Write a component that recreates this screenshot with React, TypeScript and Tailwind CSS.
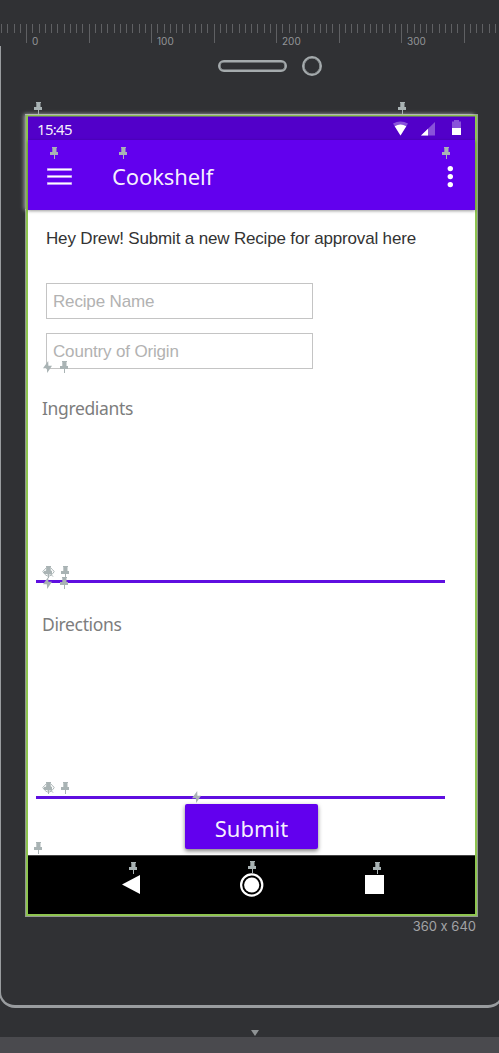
import React from 'react';

const ticks = Array.from({ length: 80 }, (_, i) => i);
const labels = ['0', '100', '200', '300'];

const pins: [number, number][] = [
  [34, 102], [398, 102], [50, 147], [119, 147], [442, 147], [60, 361],
  [44, 566], [61, 566], [60, 577], [44, 782], [61, 782], [34, 842],
  [129, 862], [248, 861], [373, 862],
];
const bolts: [number, number][] = [[43, 361], [43, 577], [192, 791]];
const eyes: [number, number][] = [[42, 566], [42, 782]];

function Ruler() {
  return (
    <div className="relative h-[46px] shrink-0 overflow-hidden pt-6">
      <div className="flex pl-[1.2px]">
        {ticks.map((i) => (
          <div key={i} className="w-[6.25px] shrink-0">
            <div className={i % 10 === 4 ? 'h-[19px] w-px bg-[#5f6063]' : 'h-[9px] w-px bg-[#5f6063]'} />
          </div>
        ))}
      </div>
      <div className="absolute top-[35px] left-[32px] flex font-['Inter',sans-serif] text-[10px] leading-3 text-[#929497]">
        {labels.map((l) => (
          <span key={l} className="w-[125px] shrink-0">{l}</span>
        ))}
      </div>
    </div>
  );
}

function Pin() {
  return (
    <svg width="8" height="12" viewBox="0 0 8 12" className="block" fill="#a9b3b4">
      <path d="M2 0H7V1H6.5V5H8V8H0V5H2.3V1H2Z" />
      <path d="M4 8H5V12H4Z" />
    </svg>
  );
}

function Bolt() {
  return (
    <svg width="9" height="12" viewBox="0 0 9 12" className="block" fill="#a9b3b4">
      <path d="M5.2 0L0 7.3H3.8L4.2 12L9 4.8H5.4Z" />
    </svg>
  );
}

function Eye() {
  return (
    <svg width="13" height="12" viewBox="0 0 13 12" className="block" fill="none" stroke="#a9b3b4" strokeWidth="1">
      <path d="M.8 5.7C3 2.4 5 1.3 6.5 1.3S10 2.4 12.2 5.7C10 9 8 10.1 6.5 10.1S3 9 .8 5.7Z" />
      <circle cx="6.5" cy="5.7" r="2.6" />
      <path d="M8.5 8L11 10.6" />
    </svg>
  );
}

function StatusBar() {
  return (
    <div className="flex h-[23px] items-center justify-between bg-[#5200c9] pr-[14px] pl-[9px]">
      <span className="font-['Noto_Sans',sans-serif] text-[15px] leading-5 tracking-[-0.7px] text-white/95">15:45</span>
      <div className="flex items-center">
        <svg width="15" height="15" viewBox="0 0 15 15">
          <path d="M0 2.5Q7.5-1.5 15 2.5L7.5 14.5Z" fill="#fff" fillOpacity=".32" />
          <path d="M1.7 5.3Q7.5 1.6 13.3 5.3L7.5 14.5Z" fill="#fff" />
        </svg>
        <svg width="14" height="15" viewBox="0 0 14 15" className="ml-[13px]">
          <path d="M14 1V14.5H0Z" fill="#fff" fillOpacity=".32" />
          <path d="M7 7.8V14.5H0Z" fill="#fff" />
        </svg>
        <svg width="9" height="16" viewBox="0 0 9 16" className="mb-[2px] ml-[17px]">
          <path d="M0 1.5H2V0H7V1.5H9V8H0Z" fill="#fff" fillOpacity=".32" />
          <path d="M0 8H9V15H0Z" fill="#fff" />
        </svg>
      </div>
    </div>
  );
}

function AppBar() {
  return (
    <div className="relative flex h-[70px] items-center bg-[#6200ee] pr-[22px] pb-px pl-[19px] shadow-[0_1px_3px_rgba(0,0,0,.4)]">
      <svg width="25" height="20" viewBox="0 0 25 20" fill="#fff" className="mt-[5px]">
        <path d="M0 1H25V4H0ZM0 8H25V11H0ZM0 15H25V18H0Z" fillOpacity=".45" />
        <path d="M.5 1.7H24.5V3.3H.5ZM.5 8.7H24.5V10.3H.5ZM.5 15.7H24.5V17.3H.5Z" />
      </svg>
      <h1 className="mt-[3px] ml-10 font-['Noto_Sans',sans-serif] text-[22px] leading-8 font-normal tracking-[-0.1px] text-white/95">Cookshelf</h1>
      <svg width="6" height="24" viewBox="0 0 6 24" fill="#fff" className="mt-[5px] ml-auto">
        <circle cx="3.3" cy="3.6" r="2.7" />
        <circle cx="3.3" cy="11.6" r="2.7" />
        <circle cx="3.3" cy="19.6" r="2.7" />
      </svg>
    </div>
  );
}

function Field({ text }: { text: string }) {
  return (
    <div className="flex h-9 w-[267px] items-center border border-[#c4c4c4] pt-[2px] pl-[6px] font-['Liberation_Sans',sans-serif] text-[17px] tracking-[-0.16px] text-[#b2b2b2]">
      {text}
    </div>
  );
}

function TextArea({ text }: { text: string }) {
  return (
    <div className="ml-2 h-[191px] w-[409px] border-b-[3px] border-[#5f0fe0] pt-px pl-[6px] font-['Noto_Sans',sans-serif] text-[17.5px] leading-[30px] tracking-[-0.36px] text-[#7d7d7d]">
      {text}
    </div>
  );
}

function NavBar() {
  return (
    <div className="mt-auto flex h-[59px] border-t border-[#444] bg-black pt-[17px] pl-[94px]">
      <svg width="18" height="24" viewBox="0 0 18 24" fill="#fff">
        <path d="M18 2V21L0 11.5Z" />
      </svg>
      <svg width="24" height="24" viewBox="0 0 24 24" className="ml-[100px]">
        <circle cx="11.7" cy="12" r="10.6" fill="none" stroke="#fff" strokeWidth="2.2" />
        <circle cx="11.7" cy="12" r="7.6" fill="#fff" />
      </svg>
      <div className="mt-[2px] ml-[101px] size-[19px] bg-white" />
    </div>
  );
}

function Screen() {
  return (
    <div className="relative mt-[38px] ml-[25px] w-[453px] border border-[#929892]">
      <div className="absolute top-0 -left-px h-[94px] w-[448px] shadow-[0_0_4px_1px_rgba(255,255,255,.55)]" />
      <div className="relative border-2 border-t border-[#8ec44f] bg-white">
        <div className="flex h-[798px] flex-col border-t border-[#675f88]">
          <StatusBar />
          <AppBar />
          <p className="mt-[19px] ml-[18px] font-['Liberation_Sans',sans-serif] text-[17px] leading-5 tracking-[-0.17px] whitespace-nowrap text-[#333]">
            Hey Drew! Submit a new Recipe for approval here
          </p>
          <div className="mt-[34px] ml-[18px] flex flex-col gap-[14px]">
            <Field text="Recipe Name" />
            <Field text="Country of Origin" />
          </div>
          <div className="mt-[23px] flex flex-col gap-[25px]">
            <TextArea text="Ingrediants" />
            <TextArea text="Directions" />
          </div>
          <button className="mt-[5px] ml-[157px] h-[45px] w-[133px] shrink-0 rounded-[2px] bg-[#6200ee] pt-[2px] font-['Noto_Sans',sans-serif] text-[22px] leading-8 text-white/95 shadow-[0_2px_4px_rgba(0,0,0,.5)]">
            Submit
          </button>
          <NavBar />
        </div>
      </div>
    </div>
  );
}

export default function App() {
  return (
    <div className="relative flex h-[1053px] w-[499px] flex-col overflow-hidden bg-[#303134]">
      <Ruler />
      <div className="-ml-px h-[962px] w-[505px] shrink-0 rounded-b-2xl border-2 border-t-0 border-b-[3px] border-[#999c9f]">
        <div className="flex h-[30px] items-end pl-[217px]">
          <div className="mb-[4px] h-3 w-[69px] rounded-full border-2 border-[#a5abad] shadow-[inset_0_0_0_0.6px_#a5abad]" />
          <div className="ml-[15px] size-[20px] rounded-full border-2 border-[#a5abad] shadow-[inset_0_0_0_0.6px_#a5abad]" />
        </div>
        <div className="-ml-px">
          <Screen />
          <div className="mt-px w-[476px] text-right font-['Inter',sans-serif] text-[13px] leading-4 text-[#a2a3a6] [font-feature-settings:'calt'_0]">360 x 640</div>
        </div>
      </div>
      <svg width="8" height="6" viewBox="0 0 8 6" className="mt-[22px] ml-[251px] shrink-0" fill="#8e9294">
        <path d="M0 0H8L4 6Z" />
      </svg>
      <div className="mt-auto h-4 shrink-0 bg-[#4a4a4e]" />
      {pins.map(([x, y]) => (
        <div key={`p${x}-${y}`} className="absolute" style={{ left: x, top: y }}><Pin /></div>
      ))}
      {bolts.map(([x, y]) => (
        <div key={`b${x}-${y}`} className="absolute" style={{ left: x, top: y }}><Bolt /></div>
      ))}
      {eyes.map(([x, y]) => (
        <div key={`e${x}-${y}`} className="absolute" style={{ left: x, top: y }}><Eye /></div>
      ))}
    </div>
  );
}
